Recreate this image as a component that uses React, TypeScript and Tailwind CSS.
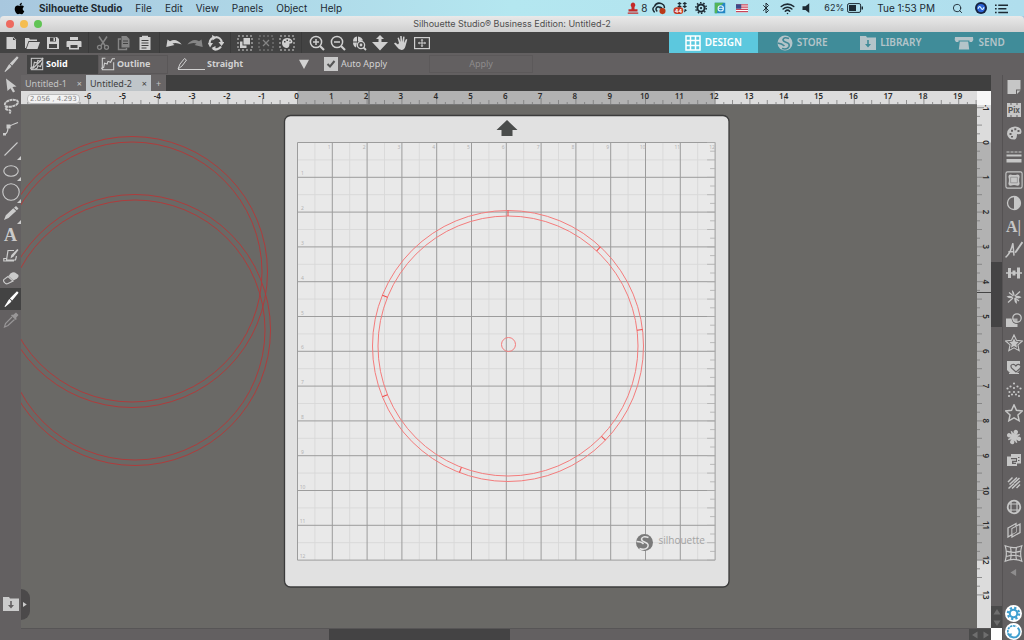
import type { ReactNode } from "react";
import clsx from "clsx";
import { FaApple } from "react-icons/fa";
import { Bluetooth, Wifi, Search } from "lucide-react";

type IconItem = { name: string; icon: ReactNode; active?: boolean; dim?: boolean; flyout?: boolean };

// One ruler inch on the canvas, in pixels at the current zoom
const INCH = 34.8;
const ORIGIN_X = 276.5;
const ORIGIN_Y = 37.5;

function Icon({ children, className = "size-4" }: { children: ReactNode; className?: string }) {
  return (
    <svg viewBox="0 0 16 16" fill="currentColor" className={clsx("shrink-0", className)} aria-hidden="true">
      {children}
    </svg>
  );
}

const line = { fill: "none", stroke: "currentColor" };
const star = "M8 .8 10.2 5.6 15.4 6.2 11.5 9.7 12.6 14.9 8 12.3 3.4 14.9 4.5 9.7 .6 6.2 5.8 5.6Z";

const folder = (
  <Icon>
    <path fillRule="evenodd" d="M0 1h6l1 1.500h9V15H0ZM7.200 5v4H5l3 3.500L11 9H8.800V5Z" />
  </Icon>
);

const knife = (
  <Icon>
    <path d="M14 .3 15.600 1.700 9.200 9.400 6.800 7.400ZM6.200 8.100 8.500 10 7.500 11.500 2.200 16 1.500 15.500Z" />
  </Icon>
);

const toolGroups: { width: string; items: IconItem[] }[] = [
  {
    width: "w-[89px] pr-[3px]",
    items: [
      { name: "New", icon: <Icon><path d="M3.500 2h6l3.500 3.500V14h-9.500ZM10 1.500V5h3.500Z" /></Icon> },
      { name: "Open", icon: <Icon><path d="M1 3h4l1 1.500h7V6H4.500L2 13H1ZM5 7h11l-2.500 7H2.500Z" /></Icon> },
      { name: "Save", icon: <Icon><path fillRule="evenodd" d="M2 2h10l2 2v10H2ZM5 2.500v4h6v-4ZM4 9v4h8V9ZM8.500 3h1.500v3H8.500Z" /></Icon> },
      { name: "Print", icon: <Icon><path fillRule="evenodd" d="M4 2h8v3H4ZM1.500 6h13q1 0 1 1v5H13v2.500H3V12H.5V7q0-1 1-1ZM4.500 10v3h7v-3Z" /></Icon> },
    ],
  },
  {
    width: "w-[71px]",
    items: [
      { name: "Cut", dim: true, icon: <Icon><path d="M4 1.500 10.300 11M12 1.500 5.700 11" {...line} strokeWidth="1.500" /><circle cx="4.500" cy="12.300" r="2" {...line} strokeWidth="1.300" /><circle cx="11.500" cy="12.300" r="2" {...line} strokeWidth="1.300" /></Icon> },
      { name: "Copy", dim: true, icon: <Icon><path fillRule="evenodd" d="M5.500 1h5L13.500 4v8.500h-8ZM7 5.500v1h5v-1ZM7 8v1h5V8Z" /><path d="M5 4H2.500v10.500h8V13" {...line} strokeWidth="1.400" /></Icon> },
      { name: "Paste", icon: <Icon><path fillRule="evenodd" d="M2.500 2H5V.8h6V2h2.500v13h-11ZM4.500 5v1h7V5ZM4.500 7.500v1h7v-1ZM4.500 10v1h7v-1ZM4.500 12.500v1h5v-1Z" /></Icon> },
    ],
  },
  {
    width: "w-[71px]",
    items: [
      { name: "Undo", icon: <Icon><path d="M.3 12 1.500 4.500 4 6.300Q10 2.500 15.700 9.500 10 7 6.500 8.500L8.500 10Z" /></Icon> },
      { name: "Redo", dim: true, icon: <Icon><path d="M15.700 12 14.500 4.500 12 6.300Q6 2.500.3 9.500 6 7 9.500 8.500L7.500 10Z" /></Icon> },
      { name: "Refresh", icon: <Icon><path d="M2 10A6 6 0 0 1 5 2.700M7.500 2.200A6 6 0 0 1 13.800 7.500M13 11.500A6 6 0 0 1 5 13.500" {...line} strokeWidth="2.200" /><path d="M4 0 9 2.500 4.500 5.500ZM10.500 7H16.500L13.500 11ZM0 8h5L2 12.500ZM7.500 11v5l-4-3Z" /></Icon> },
    ],
  },
  {
    width: "w-[71px]",
    items: [
      { name: "Select all", icon: <Icon><rect x="1" y="1" width="14" height="14" {...line} strokeDasharray="2 2" /><path d="M6.500 3H13v6.500H6.500Z" /><path d="M3 6.500h2.500v4h4V13H3Z" /></Icon> },
      { name: "Deselect all", dim: true, icon: <Icon><rect x="1" y="1" width="14" height="14" {...line} strokeDasharray="2 2" /><path d="m5 5 6 6M11 5l-6 6" {...line} strokeWidth="1.300" /></Icon> },
      { name: "Select by color", icon: <Icon><rect x="1" y="1" width="14" height="14" {...line} strokeDasharray="2 2" /><path fillRule="evenodd" d="M3 8q0-4.500 5-5 5 0 5.500 4-.5 2-3 1.500 0 5-3.500 4.500-4-1-4-5ZM5 6h1.500v1.500H5ZM7.500 4.500H9V6H7.500ZM10.500 5.500h1V7h-1Z" /></Icon> },
    ],
  },
  {
    width: "w-[135px]",
    items: [
      { name: "Zoom in", icon: <Icon><circle cx="7" cy="7" r="5.600" {...line} strokeWidth="1.500" /><path d="m11 11 4 4" {...line} strokeWidth="2.200" /><path d="M7 4v6M4 7h6" {...line} strokeWidth="1.500" /></Icon> },
      { name: "Zoom out", icon: <Icon><circle cx="7" cy="7" r="5.600" {...line} strokeWidth="1.500" /><path d="m11 11 4 4" {...line} strokeWidth="2.200" /><path d="M4 7h6" {...line} strokeWidth="1.500" /></Icon> },
      { name: "Zoom selection", icon: <Icon><path d="M2 6.500Q2 2 6 1.500v5ZM7 1.500q4 .5 5 4L7 6.500ZM2 7.500h4L5 12.500Q2 11 2 7.500Z" /><circle cx="10" cy="10" r="3.600" {...line} strokeWidth="1.300" /><circle cx="10" cy="10" r="1.400" /><path d="m12.500 12.500 2.500 2.500" {...line} strokeWidth="1.800" /></Icon> },
      { name: "Drag zoom", icon: <Icon><path d="m8 0 4 4H9.500v3H16l-8 8.500L0 7h6.500V4H4Z" /></Icon> },
      { name: "Pan", icon: <Icon><path d="m6 8-1.500-5 1.300-.5L7.500 7l-.3-6h1.500L9.200 7l1-5.500 1.400.2L11 8l2-4 1.300.6L12.500 11Q11.500 15 8.500 15 6 15 4 12L1 8.500l1.200-1L5 9.500Z" /></Icon> },
      { name: "Fit to window", icon: <Icon><rect x=".6" y="2.600" width="14.800" height="11" {...line} strokeWidth="1.200" /><path d="M8 4.500v7M4.500 8h7" {...line} /><path d="m8 4 1.500 1.500h-3ZM8 12l1.500-1.500h-3ZM4 8l1.500-1.500v3ZM12 8l-1.500-1.500v3Z" /></Icon> },
    ],
  },
];

const drawingTools: IconItem[] = [
  { name: "Knife", icon: knife },
  { name: "Select", icon: <Icon><path d="M3 1.500 13.500 9.500 9.500 10 12 14.500 10 15.500 7.500 11.200 4.500 14Z" /></Icon> },
  { name: "Lasso select", icon: <Icon><path d="M4.500 9.500Q-.5 6.500 4 3.500 9 .5 14 2.500q2.500 2-1 4.500-5 2.500-9 1.500-3 2.500 1 3.500 4 0 1.500 3.500" {...line} strokeWidth="1.900" strokeDasharray="3 .5" /></Icon> },
  { name: "Edit points", icon: <Icon><path d="M2 14Q5 13 5 7 8 5 15 2.500" {...line} strokeWidth="1.200" /><path d="M3.500 4.500h4v4h-4ZM0 13h3v2.500H0Z" /></Icon> },
  { name: "Line", flyout: true, icon: <Icon><path d="M1.500 14.500 14.500 1.500" {...line} strokeWidth="1.100" /></Icon> },
  { name: "Ellipse", flyout: true, icon: <Icon><ellipse cx="8" cy="8" rx="7.200" ry="5.300" {...line} strokeWidth="1.100" /></Icon> },
  { name: "Regular polygon", flyout: true, icon: <Icon className="size-[18px]"><circle cx="8" cy="8" r="7.300" {...line} strokeWidth="1" /></Icon> },
  { name: "Pencil", flyout: true, icon: <Icon><path d="M13 1 15.500 3.500 13.800 5.200 11 2.800ZM10.300 3.300 13.200 6 5.500 13 1 15 2.800 10.300Z" /></Icon> },
  { name: "Text", icon: <span className="font-[Liberation_Serif,serif] text-lg font-bold leading-none">A</span> },
  { name: "Sketch", icon: <Icon><path d="M13.500 8 12.500 12H3.500L5 2.500h6M3.500 10.500H.8V13h10.200" {...line} strokeWidth="1.200" /><path d="m15.500 2-5 6.500-3 2 .8-3.500 6-6Z" /></Icon> },
  { name: "Eraser", icon: <Icon><path d="M7.500 3.500Q10 1.500 12 2.500L15.500 5Q16 7 14 8.500L10.500 10.500 5.500 6Z" /><path d="M5 6.500.8 9.500Q0 11 1.500 12.500 3 14.500 5 13.500L10 11Z" {...line} strokeWidth="1.100" /></Icon> },
  { name: "Knife tool", active: true, icon: knife },
  { name: "Eyedropper", dim: true, icon: <Icon><path d="m10 3 3-2.500 2.500 2.500L13 6l.8 1-1 1L8 3.500l1-1Z" /><path d="M9 5 2.500 11.500 1.500 15 5 13.500 11.500 7.500" {...line} strokeWidth="1.200" /></Icon> },
];

const panels: IconItem[] = [
  { name: "Page setup", icon: <Icon><path d="M1.500 1h13v9.500H10V15H1.500Z" /><path d="M11 11.500h3.500L11 15Z" /></Icon> },
  {
    name: "PixScan",
    icon: (
      <Icon>
        <path d="M1 1h14v14H1Z" />
        <path d="M4 2h2M10 2h2M4 14h2M10 14h2" stroke="#636061" strokeWidth="1.200" />
        <text x="8" y="11" fontSize="8" fontWeight="bold" textAnchor="middle" fill="#555">Pix</text>
      </Icon>
    ),
  },
  { name: "Fill", icon: <Icon><path fillRule="evenodd" d="M1 9Q1 2 9 1.500q6.500.5 6.500 5.500 0 3-4.500 2 0 4.500-2 5.500Q2 15 1 9ZM3.500 8v2h2V8ZM5 4.800v2h2v-2ZM8.300 3.300v2h2v-2ZM11.500 5v2h2V5ZM5 11v1.500h2V11Z" /></Icon> },
  { name: "Line style", icon: <Icon><path d="M.5 3h15" {...line} strokeDasharray="3 1" /><path d="M.5 5.500h15v2H.5ZM.5 10h15v3.500H.5Z" /></Icon> },
  { name: "Trace", icon: <Icon className="size-[18px]"><rect x=".8" y=".8" width="14.400" height="14.400" rx="1.500" {...line} /><path d="M3 5q0-2 2-2 3 1 6 0 2 0 2 2-1 3 0 6 0 2-2 2-3-1-6 0-2 0-2-2 1-3 0-6Z" /><path d="M5 5.500h6v5H5Z" fill="none" stroke="#8e8c8d" strokeWidth=".7" /></Icon> },
  { name: "Image effects", icon: <Icon><circle cx="8" cy="8" r="6.500" {...line} strokeWidth="1.300" /><path d="M8 1.500a6.500 6.500 0 0 1 0 13Z" /></Icon> },
  { name: "Text style", icon: <span className="font-[Liberation_Serif,serif] text-base font-bold leading-none">A|</span> },
  { name: "Sketch panel", icon: <Icon className="size-[18px]"><path d="M.5 14.500Q5 11 7 2l1 11M3 9.500h5" {...line} strokeWidth="1.300" /><path d="m15.500 1-6.500 9.500" {...line} strokeWidth="1.600" /></Icon> },
  { name: "Align", icon: <Icon><path d="M2 3h3v10H2ZM6.500 5.500h3v5h-3ZM11 2.500h3v11h-3ZM0 7.300h16v1.400H0Z" /></Icon> },
  { name: "Transform", icon: <Icon><path d="M6 1q3 2 2.500 6.300Q5.500 5 6 1ZM8.500 8.500Q12 11 10.500 15 7.500 13 8.500 8.500ZM.5 7.500q4-2 7 .8-4 2.200-7-.8ZM8.500 7.800q4-2.500 7 .5-3.500 2.500-7-.5Z" /><path d="m9 7 5-4.500M7 9l-5 4.500M7.500 7 3 3.500M9 9l4 3" {...line} strokeWidth="1.300" /></Icon> },
  { name: "Modify", icon: <Icon><path d="M0 6.500h5.500q.5 5.500 6 5.500v3H0Z" /><circle cx="11" cy="6" r="4.200" {...line} strokeWidth="1.300" /><path d="M6.500 6.500h5v4.500Q6.500 11 6.500 6.500Z" opacity=".8" /></Icon> },
  { name: "Offset", icon: <Icon className="size-[18px]"><path d={star} {...line} /><path d="M8 4 9.300 6.700 12.300 7.100 10.100 9.200 10.700 12.200 8 10.700 5.300 12.200 5.900 9.200 3.700 7.100 6.700 6.700Z" /></Icon> },
  { name: "Replicate", icon: <Icon><path d="M1 2h13v9L11 14H4L1 11Z" /><path d="M10 13 5.500 9Q4 6 6.500 5.500 8.500 5 9.800 7 12 4.500 14 6T13.500 10Z" stroke="#636061" strokeWidth="1.200" /><path d="M3 14.500h10" {...line} /></Icon> },
  { name: "Rhinestones", icon: <Icon><path d="M8 1.500v.01M4.500 4.500v.01M11.500 4.500v.01M1.500 6.500v.01M14.500 6.500v.01M8 6v.01M3.500 10v.01M12.500 10v.01M8 10v.01M3 14v.01M13 14v.01M6 12.500v.01M10 12.500v.01" {...line} strokeWidth="2.200" strokeLinecap="round" /></Icon> },
  { name: "Stipple", icon: <Icon className="size-[18px]"><path d={star} {...line} strokeWidth="1.300" /></Icon> },
  { name: "Puzzle", icon: <Icon><g transform="rotate(20 8 8)"><path d="M4.500 4.500h7v7h-7Z" /><circle cx="8" cy="2.800" r="2.200" /><circle cx="8" cy="13.200" r="2.200" /><circle cx="2.800" cy="8" r="2.200" /><circle cx="13.200" cy="8" r="2.200" /><path d="M3.500 3.500 6 6M12.500 3.500 10 6M3.500 12.500 6 10M12.500 12.500 10 10" {...line} strokeWidth="1.500" /></g></Icon> },
  { name: "Nesting", icon: <Icon><path fillRule="evenodd" d="M5 2h10v9.500h-4V14H1V4.500h4ZM5 6v1.200h5v1.600H6v3.200h4v-1.200H7.500V10H11V6ZM12 5v1h1.500V5ZM12 8v1h1.500V8Z" /></Icon> },
  { name: "Line effects", icon: <Icon><path d="M2 7 6.500 2.500M3.500 9.500 11 2.500M8 8l5.500-5M2.500 13.500 8 8.500M6 13.500l8-7.500M10.500 13l3.500-3.500" {...line} strokeWidth="1.500" /></Icon> },
  { name: "Warp", icon: <Icon><circle cx="8" cy="8" r="6.300" {...line} strokeWidth="1.800" /><path d="M5 2v12M11 2v12M2 5h12M2 11h12" {...line} strokeWidth="1.200" /></Icon> },
  { name: "Conical warp", icon: <Icon><path d="M2 6 10 1.500V10L2 15ZM6 6.500 14 2v8.500L6 15Z" {...line} strokeWidth="1.300" /><path d="m6.500 7 3.500-2v5l-3.500 2Z" fill="#636061" /></Icon> },
  { name: "Perspective", icon: <Icon className="size-[19px]"><path d="M1 1.500q7 3 14 0Q13 8 15 14.500q-7-3-14 0Q3 8 1 1.500ZM5.500 2.800Q6.500 8 5.500 13.200M10.500 2.800Q9.500 8 10.500 13.200M2 6q6 2 12 0M2 10.500q6-2 12 0" {...line} /></Icon> },
];

const modes: IconItem[] = [
  { name: "DESIGN", active: true, icon: <Icon><path d="M1 1h14v14H1ZM5.500 1v14M10.500 1v14M1 5.500h14M1 10.500h14" {...line} strokeWidth="1.500" /></Icon> },
  { name: "STORE", icon: <SilhouetteMark /> },
  { name: "LIBRARY", icon: folder },
  { name: "SEND", icon: <Icon className="h-4 w-5"><path d="M-1 2h18q1 2.500-1 5h-2.500V5.500h-11V7H0Q-2 4.500-1 2Z" /><path d="M3.800 6.500h8.400l1 8H2.800Z" /></Icon> },
];

const menus = ["File", "Edit", "View", "Panels", "Object", "Help"];

function SilhouetteMark() {
  return (
    <Icon>
      <circle cx="8" cy="8" r="7.500" />
      <path d="M12 3.500Q7 1.500 6 4.500q0 2 3.500 3t2.500 4q-1.500 3.500-7 2M.5 8Q5 8.500 7.500 11" fill="none" stroke="#428896" strokeWidth="1.600" />
    </Icon>
  );
}

function MenuBar() {
  return (
    <header className="flex h-4 items-center justify-between bg-gradient-to-r from-[#a8c7de] via-[#b4e7f0] to-[#b0deed] pl-[13px] pr-4 text-[10px] text-[#1d2a33]">
      <nav className="flex items-center gap-[13px]" aria-label="Menu bar">
        <FaApple className="size-[13px] text-black" aria-label="Apple menu" />
        <a href="#app" className="font-bold">Silhouette Studio</a>
        {menus.map((menu) => (
          <a key={menu} href={`#${menu.toLowerCase()}`}>{menu}</a>
        ))}
      </nav>
      <div className="flex items-center">
        <Icon className="size-3 text-[#c32a2a]"><path d="M8 .5a3.500 3.500 0 0 1 2 6v3h4v3H2v-3h4v-3a3.500 3.500 0 0 1 2-6ZM1 14h14v1.500H1Z" /></Icon>
        <span className="ml-0.5 w-[11px]">8</span>
        <Icon className="size-[14px]">
          <path d="M3 13Q-1 9 3 6q2-5 8-3 4 2 3 5M6 12Q3 9 6 7q5-1 6 3M10 8.500q-2-3-5-1" {...line} strokeWidth="1.700" />
          <circle cx="12" cy="11.500" r="3.500" fill="#b93a18" />
        </Icon>
        <Icon className="ml-[7px] h-3 w-4">
          <path d="m6 0 3 2-3 2-3-2ZM13 0l3 2-3 2-3-2ZM6 4l3 2-3 2-3-2ZM13 4l3 2-3 2-3-2ZM13 9l3 2-4 3Z" />
          <rect x="-2" y="7" width="13" height="9" rx="4" fill="#c33a26" />
          <text x="4.500" y="14" fontSize="7" fontWeight="bold" textAnchor="middle" fill="#fff">44</text>
        </Icon>
        <Icon className="ml-[6px] size-3">
          <circle cx="8" cy="8" r="4.800" {...line} strokeWidth="2.600" />
          <circle cx="8" cy="8" r="7" {...line} strokeWidth="2" strokeDasharray="2 2.400" />
          <circle cx="8" cy="8" r="1.500" />
        </Icon>
        <Icon className="ml-[7px] size-3">
          <path d="M1 1h14v14H1Z" fill="#2487c4" />
          <path d="M1 1h12L5 8l-1 7H1Z" fill="#52b457" />
          <circle cx="9" cy="8.500" r="3.500" fill="none" stroke="#e6f6ff" strokeWidth="1.500" />
          <path d="M6 8.500h6" stroke="#e6f6ff" strokeWidth="1.200" />
        </Icon>
        <Icon className="ml-[10px] size-3">
          <path d="M0 3h16v11H0Z" fill="#fff" />
          <path d="M0 3.800h16M0 6.800h16M0 9.800h16M0 12.800h16" stroke="#c8475a" strokeWidth="1.500" />
          <path d="M0 3h7v6H0Z" fill="#3c4a88" />
        </Icon>
        <Bluetooth className="ml-3 size-3" />
        <Wifi className="ml-2 size-[15px]" strokeWidth={2.500} />
        <Icon className="ml-[6px] size-3"><path d="M2 5.500h4L11 1.500v13L6 10.500H2Z" /></Icon>
        <span className="ml-[11px] text-[9px]">62%</span>
        <Icon className="ml-[3px] size-4">
          <rect x=".6" y="3.600" width="13" height="8.800" rx="1.500" {...line} />
          <path d="M2 5h7v6H2ZM14.500 6.500H16v3h-1.500Z" />
        </Icon>
        <time className="ml-[14px]">Tue 1:53 PM</time>
        <Search className="ml-[17px] size-[11px]" />
        <Icon className="ml-3 size-3">
          <circle cx="8" cy="8" r="8" fill="#16233f" />
          <circle cx="8" cy="8" r="5.500" fill="#2c63d6" />
          <path d="M4 9q2-5 4-1t4-1" fill="none" stroke="#d8f2ff" strokeWidth="1.600" />
        </Icon>
        <Icon className="ml-2 size-[13px]"><path d="M0 3h2v1.800H0ZM4 3h12v1.800H4ZM0 7.500h2v1.800H0ZM4 7.500h10v1.800H4ZM0 12h2v1.800H0ZM4 12h12v1.800H4Z" /></Icon>
      </div>
    </header>
  );
}

function TitleBar() {
  return (
    <div className="grid h-4 grid-cols-[1fr_auto_1fr] items-center rounded-t bg-gradient-to-b from-[#e9e9e9] to-[#cfcfcf] px-[6px]">
      <div className="flex gap-[6px]">
        <button aria-label="Close" className="size-2 rounded-full bg-[#ee6a5f]" />
        <button aria-label="Minimize" className="size-2 rounded-full bg-[#f5bd4f]" />
        <button aria-label="Zoom" className="size-2 rounded-full bg-[#61c454]" />
      </div>
      <h1 className="text-[9px] text-[#4e4e4e]">Silhouette Studio® Business Edition: Untitled-2</h1>
    </div>
  );
}

function Toolbar() {
  return (
    <div className="flex h-[21px] justify-between bg-[#434343]">
      <div className="flex">
        {toolGroups.map((group, i) => (
          <div key={i} className={clsx("flex items-center justify-center border-r border-[#3a3a3a] last:border-0", group.width)}>
            {group.items.map((item) => (
              <button
                key={item.name}
                aria-label={item.name}
                className={clsx("flex w-[21px] justify-center", item.dim ? "text-[#858585]" : "text-[#d0d0d0]")}
              >
                {item.icon}
              </button>
            ))}
          </div>
        ))}
      </div>
      <nav className="grid w-[355px] grid-cols-4">
        {modes.map((mode) => (
          <a
            key={mode.name}
            href={`#${mode.name.toLowerCase()}`}
            className={clsx(
              "flex items-center justify-center gap-1 font-['Noto_Sans',sans-serif] text-[10px] font-semibold",
              mode.active ? "bg-[#5cc8de] text-white" : "bg-[#408c99] text-[#b4c4c9]",
            )}
          >
            {mode.icon}
            {mode.name}
          </a>
        ))}
      </nav>
    </div>
  );
}

function QuickAccess() {
  return (
    <div className="flex h-[22px] items-center bg-[#636061] pl-[6px] font-['Noto_Sans',sans-serif] text-[9px] text-[#d2d2d2]">
      <button className="flex h-[19px] w-[71px] items-center gap-[2px] bg-[#434343] pl-[3px] font-bold text-white">
        <Icon className="size-[14px] text-[#c9c9c9]"><rect x="1.500" y="1.500" width="13" height="13" {...line} strokeWidth="1.200" /><path d="M0 13 4 11 5 6l3 1 1-3 3 1 3-4M2 14.500 14.500 2M5 14l3-1 1-3 3 1 2-5" {...line} strokeWidth="1.300" /></Icon>
        Solid
      </button>
      <button className="flex h-[19px] w-[70px] items-center gap-[2px] border border-[#5a5758] pl-[2px] font-bold">
        <Icon className="size-[14px]"><path d="M5 1.500H1.500v13h13V6M0 13l3-1 1-5 3 1 1-3 3 1 2-4h3" {...line} strokeWidth="1.200" /></Icon>
        Outline
      </button>
      <div className="ml-[9px] flex w-[132px] items-center">
        <svg viewBox="0 0 28 14" className="h-[14px] w-7" {...line} aria-hidden="true">
          <path d="M1 12.500h27M1 12l2-5 4.500-5.500 2 1.500L5 9Z" />
        </svg>
        <select
          aria-label="Knife shape"
          className="-mr-[10px] h-5 flex-1 appearance-none pl-[2px] font-bold outline-none"
          defaultValue="Straight"
        >
          <option>Straight</option>
        </select>
        <Icon className="pointer-events-none size-[10px]"><path d="M0 1h16L8 16Z" /></Icon>
      </div>
      <div className="ml-[15px] flex items-center gap-[3px]">
        <span className="grid">
          <input id="auto-apply" type="checkbox" defaultChecked className="peer size-[14px] appearance-none bg-[#c9c9c9] [grid-area:1/1]" />
          <svg viewBox="0 0 14 14" className="pointer-events-none hidden size-[14px] stroke-[#555] stroke-2 [grid-area:1/1] peer-checked:block" fill="none">
            <path d="m3.500 7 2.500 2.500L10.500 4" />
          </svg>
        </span>
        <label htmlFor="auto-apply">Auto Apply</label>
      </div>
      <button disabled className="ml-[42px] h-[18px] w-[104px] border border-[#5c595a] text-[#8d8b8c]">Apply</button>
    </div>
  );
}

function DrawingTools() {
  return (
    <aside className="flex w-[21px] shrink-0 flex-col bg-[#636061] text-[#cbcbcb]">
      <div className="flex h-[278px] flex-col">
        {drawingTools.map((tool) => (
          <button
            key={tool.name}
            aria-label={tool.name}
            className={clsx(
              "relative flex flex-1 items-center justify-center",
              tool.active && "bg-[#434343] text-white",
              tool.dim && "text-[#989697]",
            )}
          >
            {tool.icon}
            {tool.flyout && (
              <Icon className="absolute bottom-0 right-0 size-1"><path d="M16 0v16H0Z" /></Icon>
            )}
          </button>
        ))}
      </div>
      <button aria-label="Library" className="mx-auto mb-7 mt-auto">{folder}</button>
    </aside>
  );
}

function DocumentTabs() {
  return (
    <div className="flex h-4 bg-[#3f3f3f] font-['Noto_Sans',sans-serif] text-[9px] leading-none text-[#c4c4c4]">
      <div className="flex w-[65px] items-center justify-between bg-[#686566] px-1">
        <button>Untitled-1</button>
        <button aria-label="Close Untitled-1">×</button>
      </div>
      <div className="flex w-[65px] items-center justify-between bg-[#bfc5c9] px-1 text-[#3e3e3e]">
        <button>Untitled-2</button>
        <button aria-label="Close Untitled-2">×</button>
      </div>
      <button aria-label="New tab" className="w-[15px] bg-[#686566]">+</button>
    </div>
  );
}

const quarterTicks = (from: number, to: number) =>
  Array.from({ length: (to - from) * 4 + 1 }, (_, i) => from + i / 4);

const range = (from: number, to: number) => Array.from({ length: to - from + 1 }, (_, i) => from + i);

function tickLength(n: number) {
  if (Number.isInteger(n)) return 7;
  return n % 0.5 === 0 ? 5 : 3;
}

const rulerLabel = "fill-[#2b2b2b] font-['Noto_Sans',sans-serif] text-[8px] font-semibold";

function HorizontalRuler() {
  return (
    <svg className="h-[14px] min-w-0 flex-1 bg-[#dcdcdc]" aria-label="Horizontal ruler">
      <rect x={ORIGIN_X} width={INCH * 12} height="14" fill="#b2b2b2" />
      {quarterTicks(-8, 60).map((n) => (
        <path key={n} d={`M${ORIGIN_X + n * INCH} 14v${-tickLength(n)}`} stroke="#7b7b7b" strokeWidth=".8" />
      ))}
      {range(-6, 19).map((n) => (
        <text key={n} x={ORIGIN_X + n * INCH - 1} y="8" textAnchor="middle" className={rulerLabel}>{n}</text>
      ))}
      <path d="M348 0v14" stroke="#555" />
      <path d="M0 13.500h4000" stroke="#777" />
    </svg>
  );
}

function VerticalRuler() {
  return (
    <svg className="w-[14px] shrink-0 self-stretch overflow-visible bg-[#dcdcdc]" aria-label="Vertical ruler">
      <rect y={ORIGIN_Y} width="14" height={INCH * 12} fill="#b2b2b2" />
      {quarterTicks(-1, 13).map((n) => (
        <path key={n} d={`M0 ${ORIGIN_Y + n * INCH}h${tickLength(n)}`} stroke="#7b7b7b" strokeWidth=".8" />
      ))}
      {range(-1, 13).map((n) => (
        <text key={n} transform={`translate(6 ${ORIGIN_Y + n * INCH}) rotate(90)`} textAnchor="middle" className={rulerLabel}>{n}</text>
      ))}
      <path d="M0 187.500h14" stroke="#444" />
    </svg>
  );
}

function Ring({ cx, cy }: { cx: number; cy: number }) {
  return (
    <>
      <circle cx={cx} cy={cy} r="135.500" />
      <circle cx={cx} cy={cy} r="130" />
    </>
  );
}

// Angles, clockwise from the top, at which the ring is sliced
const cuts = [0, 43, 83, 134, 201, 248, 292];

function CuttingMat() {
  const size = INCH * 12;
  return (
    <g transform={`translate(${ORIGIN_X} ${ORIGIN_Y})`}>
      <rect x="-13" y="-27" width="444.500" height="471.500" rx="6" fill="#e1e1e1" stroke="#3b3b3b" strokeWidth="1.300" />
      <rect width={size} height={size} fill="#e9e9e9" />
      <path d="M209.500-22.500 220-12.500h-5v6h-11v-6h-5Z" fill="#4a4c4b" />
      {Array.from({ length: 12 }, (_, i) => (
        <path key={i} d={`M${(i + 0.5) * INCH} 0v${size}M0 ${(i + 0.5) * INCH}h${size}`} stroke="#d8d8d8" strokeWidth=".9" />
      ))}
      {Array.from({ length: 13 }, (_, i) => (
        <path key={i} d={`M${i * INCH} 0v${size}M0 ${i * INCH}h${size}`} stroke="#9c9c9c" />
      ))}
      {quarterTicks(0, 12).map((n) => (
        <path key={n} d={`M${size} ${n * INCH}h${n % 0.5 === 0 ? -8 : -5}`} stroke="#adadad" strokeWidth=".8" />
      ))}
      {Array.from({ length: 12 }, (_, i) => (
        <g key={i} className="fill-[#b3b3b3] font-['Noto_Sans',sans-serif] text-[5px]">
          <text x={(i + 1) * INCH - 3} y="6" textAnchor="middle">{i + 1}</text>
          <text x="5" y={(i + 1) * INCH - 2} textAnchor="middle">{i + 1}</text>
        </g>
      ))}
      <g transform="translate(347 400)">
        <circle r="8.500" fill="#7a7a7a" />
        <path d="M4-5Q-2-7-3-3.500q0 2 4 3.500T3 5q-3 3-8 1M-8-1q5 0 7 2.500" fill="none" stroke="#e4e4e4" strokeWidth="1.500" />
        <text x="14" y="1" className="fill-[#a3a3a3] font-['Open_Sans',sans-serif] text-[10px]">silhouette</text>
      </g>
    </g>
  );
}

function DesignCanvas() {
  return (
    <main className="relative min-w-0 flex-1 bg-[#6a6966]">
      <svg className="size-full" aria-label="Design page">
        <CuttingMat />
        <g fill="none" stroke="#ae3c3c">
          <Ring cx={111} cy={167} />
          <Ring cx={114} cy={225} />
        </g>
        <g fill="none" stroke="#f47c7c">
          <Ring cx={487} cy={241} />
          <circle cx="487.500" cy="239.500" r="7" />
          {cuts.map((angle) => (
            <path key={angle} d="M487 105.500v5.500" stroke="#f04a4a" transform={`rotate(${angle} 487 241)`} />
          ))}
        </g>
      </svg>
      <button
        aria-label="Show library"
        className="absolute bottom-2 left-0 flex h-[31px] w-[9px] items-center rounded-r-full bg-[#4b494a] pl-[2px] text-[#cbcbcb]"
      >
        <Icon className="size-[5px]"><path d="M0 0v16L12 8Z" /></Icon>
      </button>
    </main>
  );
}

function Arrow({ d, label }: { d: string; label: string }) {
  return (
    <button aria-label={label} className="flex size-[11px] items-center justify-center bg-[#4a4a4a] text-[#6e6e6e]">
      <Icon className="size-2"><path d={d} /></Icon>
    </button>
  );
}

function Panels() {
  return (
    <aside className="flex w-[22px] shrink-0 flex-col border-l border-[#555253] bg-[#636061] text-[#c6c6c6]">
      <div className="flex h-[490px] flex-col">
        {panels.map((panel) => (
          <button key={panel.name} aria-label={panel.name} className="flex flex-1 items-center justify-center">
            {panel.icon}
          </button>
        ))}
      </div>
      <button aria-label="Collapse panels" className="mx-auto mt-1 text-[#8f8d8e]">
        <Icon className="size-[7px]"><path d="M14 0v16L1 8Z" /></Icon>
      </button>
      <div className="mt-auto flex flex-col items-center gap-px">
        <button aria-label="Preferences" className="rounded-full bg-white p-px text-[#3f9fd0]">
          <Icon className="size-[15px]">
            <circle cx="8" cy="8" r="4" {...line} strokeWidth="2.200" />
            <circle cx="8" cy="8" r="6" {...line} strokeWidth="2.400" strokeDasharray="2.400 2.310" />
          </Icon>
        </button>
        <button aria-label="Theme" className="rounded-full bg-white p-px text-[#3f9fd0]">
          <Icon className="size-[15px]">
            <path d="M3.500 12A6 6 0 0 1 11 2.800" {...line} strokeWidth="1.800" strokeDasharray="2.500 .8" />
            <path d="M12.500 4A6 6 0 0 1 5 13.300" {...line} strokeWidth="2.200" />
            <path d="M1 10.500 6.500 10 4.500 15Z" />
          </Icon>
        </button>
      </div>
    </aside>
  );
}

export default function App() {
  return (
    <div className="flex min-h-screen flex-col bg-[#a8c7de] font-[Inter,sans-serif]">
      <MenuBar />
      <TitleBar />
      <Toolbar />
      <div className="flex flex-1">
        <DrawingTools />
        <div className="flex min-w-0 flex-1 flex-col bg-[#636061]">
          <QuickAccess />
          <div className="flex flex-1">
            <div className="flex min-w-0 flex-1 flex-col">
              <DocumentTabs />
              <div className="relative flex">
                <HorizontalRuler />
                <div className="w-[14px] shrink-0 bg-[#f7f7f7]" />
                <output className="absolute left-[6px] top-[3px] rounded-sm border border-[#bbb] bg-[#f2f2f2] px-[2px] font-['DejaVu_Sans',sans-serif] text-[7px] leading-[8px] text-[#858585]">
                  2.056 , 4.293
                </output>
              </div>
              <div className="flex flex-1">
                <DesignCanvas />
                <VerticalRuler />
              </div>
              <div className="flex h-3 border-t border-[#575556]">
                <div className="ml-[308px] w-[181px] bg-[#444344]" />
                <div className="ml-auto flex">
                  <Arrow label="Scroll left" d="M13 1v14L2 8Z" />
                  <Arrow label="Scroll right" d="M3 1v14L14 8Z" />
                </div>
              </div>
            </div>
            <div className="flex w-[11px] shrink-0 flex-col">
              <div className="mt-[187px] h-[65px] bg-[#444344]" />
              <div className="mt-auto">
                <Arrow label="Scroll up" d="M1 13h14L8 2Z" />
                <Arrow label="Scroll down" d="M1 3h14L8 14Z" />
              </div>
              <div className="h-3 bg-white" />
            </div>
            <Panels />
          </div>
        </div>
      </div>
    </div>
  );
}
